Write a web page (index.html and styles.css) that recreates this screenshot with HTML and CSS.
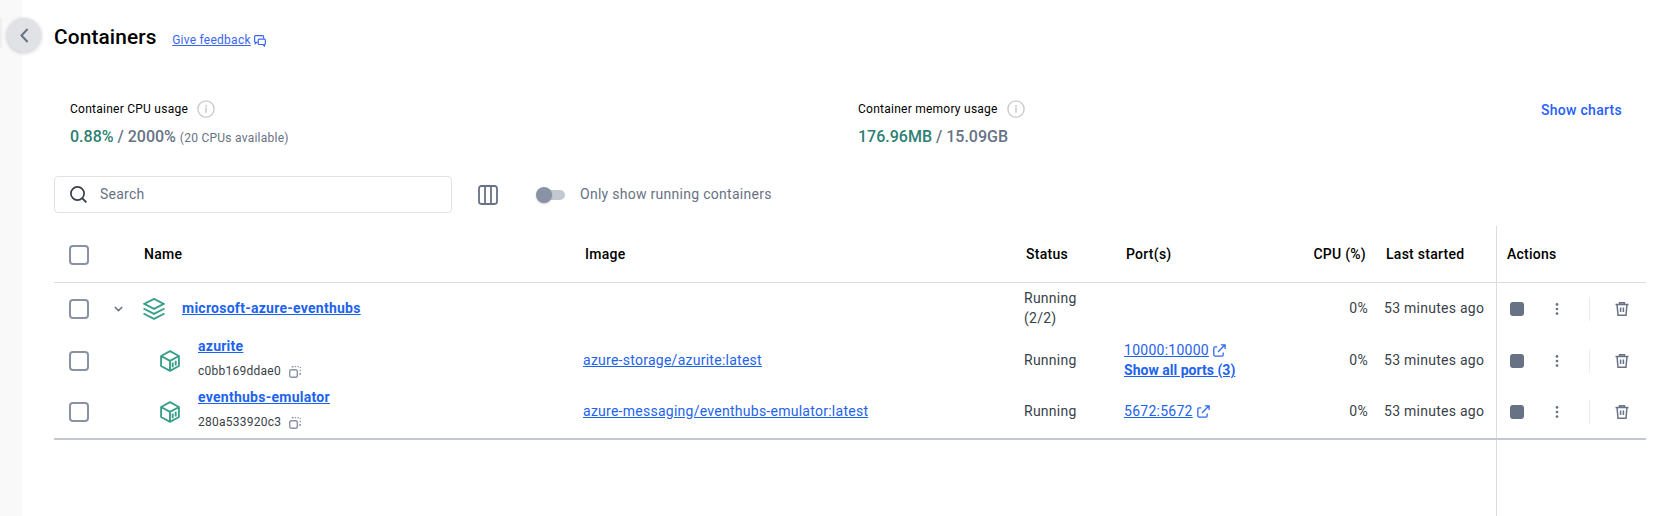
FILE: index.html
```html
<!DOCTYPE html>
<html lang="en">
<head>
<meta charset="utf-8">
<title>Containers</title>
<link rel="stylesheet" href="styles.css">
</head>
<body>
<svg class="defs" aria-hidden="true">
  <symbol id="info" viewBox="0 0 18 18"><circle cx="9" cy="9" r="8.1" fill="none" stroke="#cbcbcb" stroke-width="1.4"/><path d="M9 7.6v5.2M9 5v1.7" stroke="#cbcbcb" stroke-width="1.6"/></symbol>
  <symbol id="cube" viewBox="0 0 20 22"><path d="M10 1.2 18.9 6v10L10 20.8 1.1 16V6zM1.1 6 10 10.8 18.9 6M10 10.8v10M12.7 12.4v4.8M15.7 10.7v4.8" fill="none" stroke="#3a9f8a" stroke-width="1.9" stroke-linejoin="round"/></symbol>
  <symbol id="copy" viewBox="0 0 12 12"><rect x=".7" y="3.7" width="7.6" height="7.6" rx="1.8" fill="none" stroke="#8993a5" stroke-width="1.4"/><path d="M3.4 1.6V.7h1.2M5.8.7h1.4M8.6.7h1.2M11.3.9v1M11.3 3.8v1.5M11.3 7v1.2H10" fill="none" stroke="#8993a5" stroke-width="1.2"/></symbol>
  <symbol id="ext" viewBox="0 0 13 13"><path d="M4.3 2.8H2.2a1.4 1.4 0 0 0-1.4 1.4v6.6a1.4 1.4 0 0 0 1.4 1.4h6.6a1.4 1.4 0 0 0 1.4-1.4V8.4M5 8l6.8-7M7.8.8h4.3V5" fill="none" stroke="#2e6bee" stroke-width="1.3"/></symbol>
  <symbol id="trash" viewBox="0 0 14 14"><path d="M.5 2.6h13M4.6 2.2V.8h4.8v1.4M2.1 3l.9 10.2h8L11.9 3M5.6 5.4V10M8.4 5.4V10" fill="none" stroke="#677285" stroke-width="1.5"/></symbol>
  <symbol id="dots" viewBox="0 0 4 12"><g fill="#677285"><circle cx="2" cy="1.4" r="1.35"/><circle cx="2" cy="6" r="1.35"/><circle cx="2" cy="10.6" r="1.35"/></g></symbol>
</svg>
<div class="app">
  <aside class="rail"><span class="nav-edge"></span>
    <button class="collapse" aria-label="Collapse"><svg width="9" height="15" viewBox="0 0 9 15"><path d="M7.6 1 1.5 7.5 7.6 14" fill="none" stroke="#677285" stroke-width="2"/></svg></button>
  </aside>
  <main class="main">
    <header class="head">
      <h1 class="title">Containers</h1>
      <a class="feedback">Give feedback</a>
      <svg class="chat" width="12" height="12" viewBox="0 0 12 12"><path d="M3.4 7.4h-.7L1.3 8.7V7.3A1 1 0 0 1 .6 6.4V1.6a1 1 0 0 1 1-1h7a1 1 0 0 1 1 1v1.6M5.2 4.2h5.2a1 1 0 0 1 1 1v3.3a1 1 0 0 1-1 1V11L8.900 9.500H5.200a1 1 0 0 1-1-1V5.200a1 1 0 0 1 1-1z" fill="none" stroke="#3b66ee" stroke-width="1.2"/></svg>
    </header>
    <section class="stats">
      <div class="stat">
        <div class="stat-label"><span>Container CPU usage</span><svg width="18" height="18"><use href="#info"/></svg></div>
        <div class="stat-value"><span class="used">0.88%</span> / 2000% <small class="note">(20 CPUs available)</small></div>
      </div>
      <div class="stat">
        <div class="stat-label"><span>Container memory usage</span><svg width="18" height="18"><use href="#info"/></svg></div>
        <div class="stat-value"><span class="used">176.96MB</span> / 15.09GB</div>
      </div>
      <a class="charts">Show charts</a>
    </section>
    <section class="tools">
      <div class="search"><svg width="17" height="17" viewBox="0 0 17 17"><circle cx="7.5" cy="7.5" r="6.6" fill="none" stroke="#393f49" stroke-width="1.7"/><path d="m12.2 12.2 4.2 4.2" stroke="#393f49" stroke-width="1.9"/></svg><span class="placeholder">Search</span></div>
      <svg class="columns" width="20" height="20" viewBox="0 0 20 20"><path d="M3.4 1h13.2A2.4 2.4 0 0 1 19 3.4v13.2a2.4 2.4 0 0 1-2.4 2.4H3.4A2.4 2.4 0 0 1 1 16.6V3.4A2.4 2.4 0 0 1 3.4 1zM7 1v18M13 1v18" fill="none" stroke="#677285" stroke-width="1.8"/></svg>
      <span class="switch"><span class="thumb"></span></span>
      <span class="switch-label">Only show running containers</span>
    </section>
    <section class="table">
      <div class="row thead">
        <div class="cell pick"><span class="box"></span></div>
        <div class="cell name">Name</div><div class="cell">Image</div><div class="cell">Status</div><div class="cell">Port(s)</div><div class="cell num">CPU (%)</div><div class="cell">Last started</div><div class="cell actions">Actions</div>
      </div>
      <div class="row item">
        <div class="cell pick"><span class="box"></span><svg class="chev" width="9" height="6" viewBox="0 0 9 6"><path d="m.8 1 3.7 3.6L8.2 1" fill="none" stroke="#677285" stroke-width="1.5"/></svg></div>
        <div class="cell"><svg class="stack" width="22" height="22" viewBox="0 0 22 22"><path d="m11 .9 9.8 5-9.8 5-9.800-5zM.5 10.500 11 15.900l10.500-5.400M.5 15.500 11 20.900l10.500-5.400" fill="none" stroke="#3a9f8a" stroke-width="1.9"/></svg><a class="link strong">microsoft-azure-eventhubs</a></div>
        <div class="cell"></div><div class="cell">Running<br>(2/2)</div><div class="cell"></div><div class="cell num">0%</div><div class="cell">53 minutes ago</div>
        <div class="cell actions"><span class="stop"></span><svg class="dots" width="4" height="12"><use href="#dots"/></svg><span class="sep"></span><svg width="14" height="14"><use href="#trash"/></svg></div>
      </div>
      <div class="row item">
        <div class="cell pick"><span class="box"></span></div>
        <div class="cell"><svg class="cube" width="20" height="22"><use href="#cube"/></svg><div class="names"><a class="link strong">azurite</a><span class="id">c0bb169ddae0<svg width="12" height="12"><use href="#copy"/></svg></span></div></div>
        <div class="cell"><a class="link">azure-storage/azurite:latest</a></div><div class="cell">Running</div>
        <div class="cell ports"><span class="port"><a class="link">10000:10000</a><svg width="13" height="13"><use href="#ext"/></svg></span><a class="link strong more">Show all ports (3)</a></div>
        <div class="cell num">0%</div><div class="cell">53 minutes ago</div>
        <div class="cell actions"><span class="stop"></span><svg class="dots" width="4" height="12"><use href="#dots"/></svg><span class="sep"></span><svg width="14" height="14"><use href="#trash"/></svg></div>
      </div>
      <div class="row item last">
        <div class="cell pick"><span class="box"></span></div>
        <div class="cell"><svg class="cube" width="20" height="22"><use href="#cube"/></svg><div class="names"><a class="link strong">eventhubs-emulator</a><span class="id">280a533920c3<svg width="12" height="12"><use href="#copy"/></svg></span></div></div>
        <div class="cell"><a class="link">azure-messaging/eventhubs-emulator:latest</a></div><div class="cell">Running</div>
        <div class="cell ports"><span class="port"><a class="link">5672:5672</a><svg width="13" height="13"><use href="#ext"/></svg></span></div>
        <div class="cell num">0%</div><div class="cell">53 minutes ago</div>
        <div class="cell actions"><span class="stop"></span><svg class="dots" width="4" height="12"><use href="#dots"/></svg><span class="sep"></span><svg width="14" height="14"><use href="#trash"/></svg></div>
      </div>
      <div class="filler"></div>
    </section>
  </main>
</div>
</body>
</html>
```
FILE: styles.css
```css
* { box-sizing: border-box; }
body { margin: 0; background: #fff; font: 400 14px/20px Roboto, "Liberation Sans", sans-serif; color: #393f49; }
.defs { position: absolute; width: 0; height: 0; }
svg { flex: none; display: block; }
.app { display: flex; height: 516px; overflow: hidden; }
.rail { position: relative; width: 22px; flex: none; background: #f9f9fa; padding-top: 18px; }
.nav-edge { display: block; width: 2px; height: 30px; background: #efeff1; border-radius: 0 3px 3px 0; }
.collapse { position: absolute; left: 7px; top: 18px; width: 34px; height: 34px; border: 0; border-radius: 50%; padding: 0 0 0 1px; background: #e1e2e6; box-shadow: 0 1px 4px rgba(0,0,0,.22); display: flex; align-items: center; justify-content: center; }
.main { flex: 1; min-width: 0; padding: 0 14px 0 32px; display: flex; flex-direction: column; }
.head { display: flex; align-items: center; height: 74px; }
.title { margin: 0 15.500px 0 0; font-size: 20.8px; line-height: 28px; font-weight: 500; letter-spacing: .15px; color: #000; }
.feedback { font-size: 12px; letter-spacing: .25px; color: #3b66ee; text-decoration: underline; padding-top: 5px; }
.chat { margin: 7px 0 0 3px; }
.stats { display: grid; grid-template-columns: 788px 1fr auto; height: 102px; padding: 24px 24px 0 16px; }
.stat-label { display: flex; align-items: center; gap: 9px; height: 21px; font-size: 12px; letter-spacing: .25px; color: #000; }
.stat-value { margin-top: 6px; height: 24px; line-height: 24px; font-size: 16px; font-weight: 500; color: #677285; white-space: nowrap; }
.used { color: #2e7f74; }
.note { font-size: 12px; font-weight: 400; letter-spacing: .25px; }
.charts { color: #2560ff; font-weight: 500; letter-spacing: .28px; padding-top: 2px; }
.tools { display: flex; align-items: center; height: 37px; letter-spacing: .25px; color: #677285; }
.search { width: 398px; height: 37px; border: 1px solid #e1e2e6; border-radius: 4px; padding-left: 14.500px; display: flex; align-items: center; gap: 13.500px; }
.placeholder { padding-bottom: 2px; }
.columns { margin-left: 26px; }
.switch { margin: 1px 0 0 39px; width: 28px; height: 10px; border-radius: 5px; background: #c4c8d1; display: flex; align-items: center; }
.thumb { width: 16px; height: 16px; flex: none; margin-left: -1px; border-radius: 50%; background: #8993a5; box-shadow: 0 1px 2px rgba(0,0,0,.2); }
.switch-label { margin-left: 15px; padding-bottom: 2px; letter-spacing: .28px; }
.table { flex: 1; display: flex; flex-direction: column; margin-top: 13px; letter-spacing: .26px; }
.row { display: grid; grid-template-columns: 90px 439px 441px 100px 160px 100px 112px 150px; grid-template-rows: minmax(0, 1fr); height: 52px; flex: none; }
.thead { height: 57px; border-bottom: 1px solid #dcdcde; font-weight: 500; color: #000; }
.thead .cell { padding-left: 2px; }
.thead .name { padding-left: 0; }
.last { height: 53px; border-bottom: 2px solid #c4c8d1; }
.cell { display: flex; align-items: center; white-space: nowrap; min-width: 0; }
.item .cell { padding-bottom: 2px; }
.item .pick, .item .actions { padding-bottom: 0; }
.last .cell { padding-bottom: 3px; }
.last .pick, .last .actions { padding-bottom: 1px; }
.row .pick { padding-left: 15px; }
.thead .pick { padding-top: 2px; }
.box { width: 20px; height: 20px; flex: none; border: 2px solid #8993a5; border-radius: 4px; }
.chev { margin-left: 25px; }
.cell.num { justify-content: flex-end; padding-right: 16px; }
.thead .cell.num { padding-right: 18px; }
.link { color: #1d63ed; text-decoration: underline; }
.strong { font-weight: 700; }
.more { letter-spacing: .02px; }
.stack { margin: 2px 17px 0 -1px; }
.cube { margin: 2px 18px 0 16px; }
.names { display: flex; flex-direction: column; padding-bottom: 3px; }
.names .link { line-height: 24px; }
.id { display: flex; align-items: center; gap: 8px; margin-top: 1px; font-size: 12px; line-height: 24px; letter-spacing: .25px; }
.id svg { margin-top: 1px; }
.ports { flex-direction: column; align-items: flex-start; justify-content: center; }
.port { display: flex; align-items: center; gap: 4.500px; }
.port svg { margin-top: 1px; }
.row .actions { border-left: 1px solid #dcdcde; padding-left: 13px; }
.thead .actions { padding-left: 10px; }
.stop { width: 14px; height: 14px; border-radius: 3px; background: #677285; }
.dots { margin-left: 31px; }
.sep { width: 1px; height: 24px; background: #ececef; margin: 0 25px 0 30px; }
.filler { flex: 1; width: 150px; align-self: flex-end; border-left: 1px solid #dcdcde; }
```
